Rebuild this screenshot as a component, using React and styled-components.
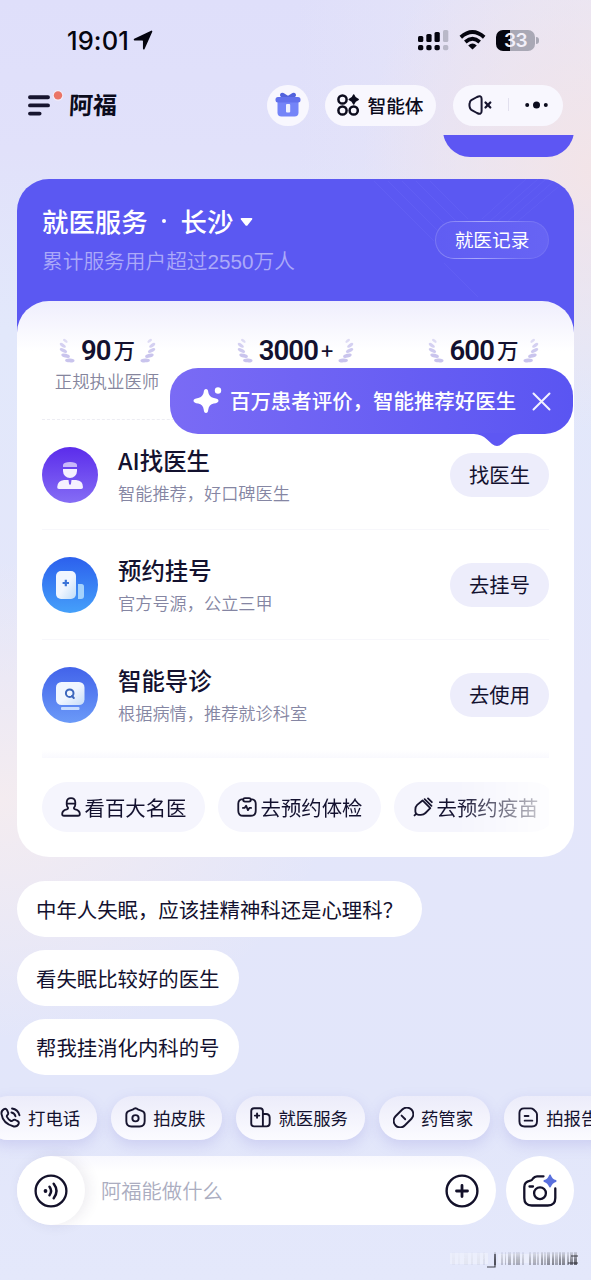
import React from 'react';
import styled, { createGlobalStyle, css } from 'styled-components';

const GlobalStyle = createGlobalStyle`
  * {
    box-sizing: border-box;
  }

  body {
    margin: 0;
    font-family: "Noto Sans CJK SC", sans-serif;
    color: #13112f;
  }

  button {
    border: 0;
    padding: 0;
    margin: 0;
    background: none;
    color: inherit;
    font: inherit;
    white-space: nowrap;
  }

  svg {
    display: block;
    flex: none;
  }
`;

const Screen = styled.div`
  width: 591px;
  height: 1280px;
  overflow: hidden;
  display: flex;
  flex-direction: column;
  background:
    radial-gradient(ellipse 230px 260px at 100% 170px, rgba(243, 228, 231, .95), rgba(243, 228, 231, 0)),
    radial-gradient(ellipse 330px 240px at 0 800px, rgba(244, 236, 240, 1), rgba(244, 236, 240, 0)),
    linear-gradient(90deg, rgba(224, 223, 250, 0) 50%, rgba(233, 231, 246, .9) 100%) 0 0 / 100% 200px no-repeat,
    linear-gradient(180deg, #dfdffa 0, #e1e1fa 150px, #e2e8fb 330px, #e4e6fa 700px, #e2e6fa 1100px, #e4e8fb 1280px);
`;

const StatusBar = styled.div`
  height: 80px;
  flex: none;
  display: flex;
  align-items: center;
  padding: 0 52px 0 67px;
`;

const Time = styled.span`
  font-family: Inter, sans-serif;
  font-size: 25.5px;
  font-weight: 500;
  line-height: 30px;
  letter-spacing: .1px;
  color: #05050f;
  padding-top: 1px;
  margin-right: 4px;
`;

const StatusIcons = styled.div`
  margin-left: auto;
  display: flex;
  align-items: center;
  gap: 10px;
`;

const Battery = styled.div`
  display: flex;
  align-items: center;
  gap: 1px;

  &::after {
    content: '';
    width: 3px;
    height: 7px;
    border-radius: 0 3px 3px 0;
    background: #a9a8b5;
  }
`;

const BatteryBody = styled.div`
  width: 39px;
  height: 21px;
  border-radius: 7px;
  background: linear-gradient(90deg, #06060f 35%, #a9a8b5 35%);
  color: #f2f0fa;
  font: 600 19px/21px Inter, sans-serif;
  letter-spacing: -.5px;
  text-align: center;
`;

const NavBar = styled.header`
  height: 55px;
  flex: none;
  display: flex;
  align-items: center;
  padding: 0 28px 5px 27px;
`;

const Brand = styled.h1`
  margin: 0 auto 0 5px;
  padding-bottom: 2px;
  font-size: 24px;
  line-height: 30px;
  font-weight: 700;
  color: #0b0b1c;
  transform: skewX(-3deg);
`;

const NavPill = styled.div`
  height: 41px;
  width: ${({ width }) => width}px;
  margin-left: ${({ gap }) => gap || 0}px;
  padding-bottom: 1px;
  border-radius: 21px;
  background: #f8f7fe;
  display: flex;
  align-items: center;
  justify-content: center;
  gap: 8px;
  font-size: 18.7px;
  font-weight: 500;
  white-space: nowrap;
  color: #0b0b1c;
`;

const PillText = styled.span`
  padding-bottom: 1px;
`;

const NavSeparator = styled.span`
  width: 1px;
  height: 13px;
  margin: 0 8px;
  background: #e2e0ee;
`;

const Content = styled.main`
  height: 961px;
  flex: none;
  padding: 0 17px;
`;

const SentBubble = styled.div`
  width: 131px;
  height: 22px;
  margin-left: auto;
  overflow: hidden;
  display: flex;
  align-items: flex-end;

  &::after {
    content: '';
    flex: none;
    width: 131px;
    height: 56px;
    border-radius: 27px;
    background: #5d56f3;
  }
`;

const ServiceCard = styled.section`
  margin-top: 22px;
  height: 678px;
  border-radius: 32px;
  background: linear-gradient(180deg, #5b58f2 0, #5b58f2 200px, transparent 200px);
`;

const CardHead = styled.div`
  height: 122px;
  padding: 0 25px;
  display: flex;
  justify-content: space-between;
  position: relative;
  overflow: hidden;
  border-radius: 32px 32px 0 0;
`;

const HeadPattern = styled.svg`
  position: absolute;
  right: 0;
  top: 0;
`;

const HeadTitle = styled.h2`
  margin: 24px 0 0;
  display: flex;
  align-items: center;
  font-size: 26.4px;
  line-height: 36px;
  font-weight: 500;
  color: #fff;
`;

const Dot = styled.span`
  width: 4px;
  height: 4px;
  border-radius: 2px;
  margin: 0 15px 0 14px;
  background: #fff;
`;

const Caret = styled.svg`
  margin: 2px 0 0 7px;
`;

const HeadNote = styled.p`
  margin: 8px 0 0;
  font-family: "Liberation Sans", "Noto Sans CJK SC", sans-serif;
  font-size: 20.7px;
  line-height: 30px;
  font-weight: 350;
  color: #aba9f9;
`;

const RecordButton = styled.button`
  position: relative;
  width: 114px;
  height: 38px;
  margin-top: 42px;
  border-radius: 19px;
  border: 1px solid transparent;
  background:
    linear-gradient(90deg, #605df3, #6764f4) padding-box,
    linear-gradient(100deg, #7573f3 0, #aba9fb 40%, #7a78f5 75%, #716ef5 100%) border-box;
  color: #fff;
  font-size: 18.7px;
  line-height: 32px;
  padding-bottom: 2px;
`;

const Panel = styled.div`
  height: 556px;
  padding: 0 25px;
  border-radius: 32px;
  background: linear-gradient(180deg, #efeefd 0, #fff 50px);
`;

const Stats = styled.div`
  height: 119px;
  padding: 33px 13px 0;
  display: flex;
  justify-content: space-between;
  align-items: flex-start;
  border-bottom: 1px dashed #ededf3;
`;

const Stat = styled.div`
  width: 105px;
  display: flex;
  flex-direction: column;
  align-items: center;
  white-space: nowrap;
`;

const StatValue = styled.div`
  display: flex;
  align-items: center;
  height: 32px;
`;

const StatNumber = styled.b`
  margin-left: 6px;
  padding-top: 2px;
  font-family: Roboto, sans-serif;
  font-size: 27.5px;
  line-height: 32px;
  font-weight: 600;
  letter-spacing: -.9px;
`;

const StatUnit = styled.span`
  margin: 0 5px 0 3px;
  font-size: 21.5px;
  line-height: 30px;
  font-weight: 500;
  padding-bottom: 1px;
`;

const StatLabel = styled.div`
  margin: 2px 0 0 -1px;
  font-size: 17.4px;
  line-height: 26px;
  font-weight: 350;
  color: #85859d;
`;

const ServiceRow = styled.div`
  position: relative;
  height: 110px;
  display: flex;
  align-items: center;
  ${({ $last }) => !$last && css`
    border-bottom: 1px solid #f7f7fb;
  `}
`;

const ServiceText = styled.div`
  margin: 0 auto 0 20px;
  padding-top: 1px;
`;

const ServiceName = styled.h3`
  margin: 0;
  font-size: 23.4px;
  line-height: 32px;
  font-weight: 500;
`;

const ServiceNote = styled.p`
  margin: 3px 0 0;
  font-size: 17.2px;
  line-height: 28px;
  font-weight: 350;
  color: #8586a3;
`;

const ActionButton = styled.button`
  width: 99px;
  height: 44px;
  border-radius: 22px;
  background: #ededfb;
  font-size: 20.3px;
  line-height: 42px;
  padding-bottom: 2px;
`;

const Tooltip = styled.div`
  position: absolute;
  z-index: 2;
  left: 128px;
  top: -52px;
  width: 403px;
  height: 66px;
  padding: 0 22px 0 23px;
  border-radius: 28px;
  background: linear-gradient(90deg, #7a6bf5, #5a55f2);
  display: flex;
  align-items: center;
  font-size: 20.45px;
  line-height: 30px;
  font-weight: 500;
  white-space: nowrap;
  color: #fff;
`;

const TooltipText = styled.span`
  margin: 0 auto 2px 8px;
`;

const TooltipTail = styled.svg`
  position: absolute;
  left: 304px;
  top: 65px;
`;

const PanelFade = styled.div`
  height: 8px;
  background: linear-gradient(180deg, #fff, #f9f9fe);
`;

const LinkRow = styled.div`
  margin-top: 24px;
  display: flex;
  gap: 13px;
  overflow: hidden;
  mask-image: linear-gradient(90deg, #000 415px, transparent 525px);
`;

const LinkChip = styled.button`
  flex: none;
  width: 163px;
  height: 50px;
  border-radius: 25px;
  background: #f5f5fd;
  display: flex;
  align-items: center;
  justify-content: center;
  gap: 4px;
  font-size: 20.4px;
  line-height: 46px;
  padding-bottom: 1px;
`;

const Suggestions = styled.div`
  margin-top: 24px;
  display: flex;
  flex-direction: column;
  align-items: flex-start;
  gap: 13px;
`;

const Suggestion = styled.button`
  height: 56px;
  padding: 0 19px 1px 19px;
  border-radius: 28px;
  background: #fff;
  font-size: 20.4px;
`;

const QuickBar = styled.nav`
  height: 44px;
  flex: none;
  display: flex;
  gap: 14px;
  margin-left: -14px;
`;

const QuickChip = styled.button`
  flex: none;
  height: 44px;
  padding: 0 17px 1px 14px;
  border-radius: 22px;
  background: linear-gradient(180deg, #ececfa, #fbfbff);
  box-shadow: 0 5px 14px rgba(125, 120, 215, .22);
  display: flex;
  align-items: center;
  gap: 7px;
  font-size: 17.4px;
  line-height: 42px;
`;

const Composer = styled.div`
  margin-top: 16px;
  padding: 0 17px;
  flex: none;
  display: flex;
  gap: 10px;
`;

const InputBox = styled.div`
  width: 479px;
  height: 69px;
  padding-right: 17px;
  border-radius: 35px;
  background: linear-gradient(180deg, #f8f8fe, #fff 16px);
  display: flex;
  align-items: center;
`;

const RoundButton = styled.button`
  width: 68px;
  height: 69px;
  flex: none;
  border-radius: 50%;
  background: #fff;
  display: flex;
  align-items: center;
  justify-content: center;
  ${({ $raised }) => $raised && css`
    box-shadow: 4px 0 14px rgba(50, 45, 90, .09);
  `}
`;

const Placeholder = styled.span`
  margin: 0 auto 1px 16px;
  font-size: 20.3px;
  line-height: 30px;
  font-weight: 350;
  color: #abadc0;
`;

const Smudge = styled.svg`
  margin: 25px 12px 0 auto;
`;

const Line = ({ size = 21, width = 2, children }) => (
  <svg width={size} height={size} viewBox="0 0 22 22" fill="none" stroke="#17152f"
    strokeWidth={width} strokeLinecap="round" strokeLinejoin="round">
    {children}
  </svg>
);

const ArrowIcon = () => (
  <svg width="20" height="20" viewBox="0 0 20 20">
    <path d="M18.500 1.500 10.800 18.600V10.900q0-1.300-1.300-1.300H1.600Z" fill="#05050f" stroke="#05050f" strokeWidth="1.700" strokeLinejoin="round" />
  </svg>
);

const SignalIcon = () => (
  <svg width="31" height="21" viewBox="0 0 31 21" fill="#05050f">
    <rect x="0" y="6" width="5.3" height="6" rx="1.5" />
    <rect x="8.3" y="4" width="5.3" height="8" rx="1.5" />
    <rect x="16.5" y="2" width="5.3" height="10" rx="1.5" />
    <rect x="25" y="0" width="5.3" height="12" rx="1.5" fill="#b9b8c8" />
    <rect x="0" y="15" width="5.3" height="5.3" rx="1.7" />
    <rect x="8.3" y="15" width="5.3" height="5.3" rx="1.7" />
    <rect x="16.5" y="15" width="5.3" height="5.3" rx="1.7" />
    <rect x="25" y="15" width="5.3" height="5.3" rx="1.7" fill="#b9b8c8" />
  </svg>
);

const WifiIcon = () => (
  <svg width="27" height="20" viewBox="0 0 27 20" fill="none" stroke="#05050f" strokeWidth="3.800">
    <path d="M1.800 7.200Q13.500-3 25.200 7.200" />
    <path d="M6.300 12q7.200-6.300 14.400 0" />
    <path d="M9.200 15.400q4.300-3.800 8.600 0L13.500 19.400Z" fill="#05050f" stroke="none" />
  </svg>
);

const MenuIcon = () => (
  <svg width="37" height="31" viewBox="0 0 37 31">
    <path d="M3 7.200h18M3 15.400h18M3 23.600h9.600" stroke="#17152f" strokeWidth="3.900" strokeLinecap="round" />
    <circle cx="31" cy="5.400" r="5.300" fill="#f2ecf8" />
    <circle cx="31" cy="5.400" r="4.200" fill="#ea7567" />
  </svg>
);

const GiftIcon = () => (
  <svg width="26" height="26" viewBox="0 0 26 26">
    <path d="M5 3.500Q5 .2 8.500 1L13 3.800 17.500 1Q21 .2 21 3.500L19 7H7Z" fill="#5161dc" />
    <path d="M2.500 10h21v10.500a4 4 0 0 1-4 4h-13a4 4 0 0 1-4-4Z" fill="#7484f8" />
    <rect x=".5" y="5" width="25" height="5.500" rx="2.500" fill="#6270ec" />
    <rect x="11" y="12" width="4.200" height="8.500" rx="1" fill="#eef0ff" />
  </svg>
);

const AgentsIcon = () => (
  <svg width="22" height="22" viewBox="0 0 22 22" fill="none" stroke="#0b0b1c" strokeWidth="2.500">
    <circle cx="5.500" cy="5.500" r="4.100" />
    <circle cx="5.500" cy="16.500" r="4.100" />
    <circle cx="16.700" cy="16.500" r="4.100" />
    <path d="M16.700 1q1 3.500 4.500 4.500-3.500 1-4.500 4.500-1-3.500-4.500-4.500 3.500-1 4.500-4.500Z" fill="#0b0b1c" strokeWidth="1.400" strokeLinejoin="round" />
  </svg>
);

const MuteIcon = () => (
  <svg width="24" height="20" viewBox="0 0 24 20" fill="none" stroke="#17152f" strokeWidth="2" strokeLinecap="round" strokeLinejoin="round">
    <path d="M3.300 5.200 9 2q4.600-2.200 4.600 2v12q0 4.200-4.600 2L3.300 14.800Q2 14 1.700 12q-.5-2 0-4 .3-2 1.600-2.800Z" />
    <path d="m17.500 7.500 4.800 5m0-5-4.800 5" strokeWidth="2.300" />
  </svg>
);

const MoreIcon = () => (
  <svg width="23" height="8" viewBox="0 0 23 8" fill="#0b0b1c">
    <circle cx="2.200" cy="4" r="2" />
    <circle cx="11.500" cy="4" r="3.500" />
    <circle cx="20.800" cy="4" r="2" />
  </svg>
);

const Laurel = ({ flip }) => (
  <svg width="16" height="27" viewBox="0 0 17 27" fill="#c9c4ed">
    <g transform={flip ? 'translate(17 0) scale(-1 1)' : undefined}>
      <ellipse cx="6.700" cy="3.200" rx="2.900" ry="1.400" transform="rotate(38 6.700 3.200)" opacity=".6" />
      <ellipse cx="4" cy="8" rx="3.700" ry="1.700" transform="rotate(34 4 8)" opacity=".8" />
      <ellipse cx="4.700" cy="13.500" rx="4.200" ry="1.800" transform="rotate(25 4.700 13.500)" opacity=".9" />
      <ellipse cx="7" cy="19" rx="4.700" ry="2" transform="rotate(16 7 19)" />
      <ellipse cx="11.500" cy="24" rx="5" ry="2.100" transform="rotate(3 11.500 24)" />
    </g>
  </svg>
);

const DoctorIcon = () => (
  <svg width="56" height="56" viewBox="0 0 56 56">
    <linearGradient id="doctor" x2="0" y2="1">
      <stop stopColor="#5b2ceb" />
      <stop offset="1" stopColor="#856df5" />
    </linearGradient>
    <circle cx="28" cy="28" r="28" fill="url(#doctor)" />
    <path d="M21 20v-2.500q1-2.500 7-2.500t7 2.500V20Z" fill="#c9b8fa" />
    <path d="M21 22h14v2a7 7 0 0 1-14 0Z" fill="#f5f1ff" />
    <path d="M22 33h4.500l.6 4.500h1.800l.6-4.500H34q7 .6 7 7.200 0 1.800-1.800 1.800H17q-2 0-1.800-2 .4-6.400 6.800-7Z" fill="#f5f1ff" />
  </svg>
);

const HospitalIcon = () => (
  <svg width="56" height="56" viewBox="0 0 56 56">
    <linearGradient id="hospital" x2="0" y2="1">
      <stop stopColor="#2c60ed" />
      <stop offset="1" stopColor="#45a0fa" />
    </linearGradient>
    <linearGradient id="wall" x2="1" y2="1">
      <stop offset=".5" stopColor="#f0f6ff" />
      <stop offset="1" stopColor="#bfdcf8" />
    </linearGradient>
    <circle cx="28" cy="28" r="28" fill="url(#hospital)" />
    <rect x="14" y="14" width="20" height="28" rx="5" fill="url(#wall)" />
    <path d="M36 27h3.500q2.500 0 2.500 2.500V39q0 3-3 3h-3Z" fill="#a4d2fc" />
    <path d="M23.800 22.800v6.400M20.600 26H27" stroke="#3b74d8" strokeWidth="2.200" />
  </svg>
);

const TriageIcon = () => (
  <svg width="56" height="56" viewBox="0 0 56 56">
    <linearGradient id="triage" x2="0" y2="1">
      <stop stopColor="#4263ea" />
      <stop offset="1" stopColor="#6b9af8" />
    </linearGradient>
    <linearGradient id="monitor" x2="1" y2="1">
      <stop offset=".5" stopColor="#f0f6ff" />
      <stop offset="1" stopColor="#c6dcf8" />
    </linearGradient>
    <circle cx="28" cy="28" r="28" fill="url(#triage)" />
    <rect x="14" y="15" width="28.500" height="23" rx="5.500" fill="url(#monitor)" />
    <rect x="19" y="40" width="18.500" height="3" rx="1" fill="#c7dcff" />
    <circle cx="27.700" cy="26.200" r="3.800" fill="none" stroke="#3c67bd" strokeWidth="2" />
    <path d="m30 29 1.800 2" stroke="#3c67bd" strokeWidth="2" strokeLinecap="round" />
  </svg>
);

const SparkIcon = () => (
  <svg width="29" height="30" viewBox="0 0 29 30" fill="#fff">
    <path d="M13 3q2 0 2.300 3.200.7 4.900 5.500 5.700 4.700.6 4.700 2.800t-4.700 2.800q-4.900.8-5.500 6Q15 27 13 27t-2.300-3.500q-.6-5.200-5.500-6Q.5 16.900.5 14.700t4.700-2.800q4.800-.8 5.500-5.700Q11 3 13 3Z" />
    <circle cx="25" cy="4.500" r="3.200" />
  </svg>
);

const CloseIcon = () => (
  <svg width="19" height="19" viewBox="0 0 19 19" stroke="#f2f1ff" strokeWidth="2" strokeLinecap="round">
    <path d="m1.500 1.500 16 16m0-16-16 16" />
  </svg>
);

const PhoneIcon = () => (
  <Line>
    <path d="M4.200 2.200Q1 4 1.600 7.500 3 17.500 14.500 20.400q3.500.5 5-2.700.7-1.900-1-2.900l-2.300-1.200q-1.500-.7-2.700.4-1.200 1.300-2.600.3-2.300-1.400-3.600-3.900-.6-1.200.7-2.300 1-1 .4-2.500L7.300 3.100Q6.200 1.200 4.200 2.200Z" />
    <path d="M12 5.800q3.300.7 4.200 4M12.600 1.600q6.200 1 7.800 7" />
  </Line>
);

const SkinCameraIcon = () => (
  <Line>
    <path d="M8 2.800 9.800 1.600q1.200-.6 2.400 0L14 2.800l3.600 1.300q3 1 3 4V15q0 5.400-5.400 5.400H6.800Q1.400 20.400 1.400 15V8.100q0-3 3-4Z" />
    <circle cx="11" cy="11.800" r="3.300" />
  </Line>
);

const BuildingIcon = () => (
  <Line>
    <path d="M13.500 20.300H4.300q-3 0-3-3V4.300q0-3 3-3h6.200q3 0 3 3v16Zm0-13h3.300q3.800 0 3.800 3.800v6q0 3.200-3.200 3.200h-3.900M7.400 6.700v4.600M5.100 9h4.600" />
  </Line>
);

const PillIcon = () => (
  <Line>
    <rect x="-.8" y="4.200" width="23.600" height="13.600" rx="6.800" transform="rotate(-45 11 11)" />
    <path d="m9 9 3.800 3.800" />
  </Line>
);

const ReportIcon = () => (
  <Line>
    <path d="M6.500 1.400h6.800q1.700 0 3 1.200l2.300 2.300q1.300 1.300 1.300 3V15q0 5.500-5.400 5.500H7Q1.500 20.500 1.500 15V6.400q0-5 5-5ZM7 9.500h4M7 14.300h8" />
  </Line>
);

const PersonIcon = () => (
  <Line size={20}>
    <path d="M6.300 5.600q.2-4.300 4.700-4.300t4.700 4.300v2.900q-.2 2-1.400 3.200-.5 1.300 1.400 1.900 5 1.200 5 5 0 2-2 2H3.300q-2 0-2-2 0-3.800 5-5 1.900-.6 1.400-1.900-1.200-1.200-1.400-3.200ZM6.500 7.200h9" />
  </Line>
);

const CheckupIcon = () => (
  <Line size={20}>
    <path d="M6.500 2.400Q1.400 2.700 1.400 7.500V15q0 5.600 5.600 5.600h8q5.600 0 5.600-5.600V7.500q0-4.800-5.100-5.100M8.800 1.200h4.400q2 0 2 1.900T13.200 5H8.800q-2 0-2-1.900t2-1.900ZM6.500 12h1.800L10 9.500l2 5 1.600-2.500h1.900" />
  </Line>
);

const VaccineIcon = () => (
  <Line size={20}>
    <path d="m10.500 3.800 8.500 8.500-5.300 5.300q-2 2-5 2H6.200q-3.400-.2-3.600-3.600v-2.300q0-3 2-5ZM3.500 18.500l-1.800 1.800M12.800 2.300l7.500 7.500M16.500 1.500l4.200 4.200" />
  </Line>
);

const VoiceIcon = () => (
  <svg width="34" height="34" viewBox="0 0 34 34" fill="none" stroke="#13112a" strokeWidth="2.300" strokeLinecap="round">
    <circle cx="17" cy="17" r="15.400" />
    <circle cx="11.500" cy="17" r="1.900" fill="#13112a" stroke="none" />
    <path d="M15.500 12.800q3.200 4.200 0 8.400M19.700 9.800q5.600 7.200 0 14.400" strokeWidth="2.500" />
  </svg>
);

const PlusIcon = () => (
  <svg width="34" height="34" viewBox="0 0 34 34" fill="none" stroke="#13112a" strokeWidth="2.400" strokeLinecap="round">
    <circle cx="17" cy="17" r="15.400" />
    <path d="M17 11.500v11M11.500 17h11" strokeWidth="2.800" />
  </svg>
);

const CameraIcon = () => (
  <svg width="36" height="34" viewBox="0 0 36 34" fill="none" stroke="#13112a" strokeWidth="2.300" strokeLinecap="round">
    <path d="M21.500 2.300H15q-2.500 0-4 2.200Q9.800 6.500 8.300 6.700 2.300 7.800 2.300 13v11q0 7.500 7.500 7.500h16q7.500 0 7.500-7.500V14.500M7.500 12.500h3.500" />
    <circle cx="18" cy="19.200" r="5.900" />
    <path d="M28 1.500q1.600 4.300 5.600 5.500-4 1.200-5.600 5.500-1.600-4.300-5.600-5.500 4-1.200 5.600-5.500Z" fill="#5a70dd" stroke="#5a70dd" strokeWidth="1.900" strokeLinejoin="round" />
  </svg>
);

const smudgeBars = [
  [2, 3, .04], [8, 2, .03], [14, 4, .05], [21, 2, .06], [27, 3, .06], [33, 2, .1], [44, 2, .75],
  [51, 2, .3], [55, 1, .35], [58, 3, .45], [63, 2, .4], [66, 4, .45], [72, 2, .3], [79, 2, .45],
  [83, 3, .45], [87, 2, .35], [91, 2, .6], [94, 2, .45], [97, 3, .65], [102, 2, .7], [105, 3, .5],
  [109, 2, .75], [112, 3, .7], [117, 2, .55], [120, 3, .75], [124, 3, .9],
];

const SmudgeMark = () => (
  <Smudge width="129" height="18" viewBox="0 0 129 18">
    <defs>
      <linearGradient id="smudge" x2="0" y2="1">
        <stop stopColor="#2a2a33" stopOpacity=".15" />
        <stop offset=".6" stopColor="#2a2a33" stopOpacity=".65" />
        <stop offset="1" stopColor="#2a2a33" stopOpacity=".75" />
      </linearGradient>
      <filter id="smear">
        <feGaussianBlur stdDeviation=".6" />
      </filter>
    </defs>
    <path d="M0 3h38v11H0zM48 4h80v9H48z" fill="#fff" opacity=".3" filter="url(#smear)" />
    <g filter="url(#smear)">
      {smudgeBars.map(([x, width, opacity]) => (
        <rect key={x} x={x} y="2" width={width} height="13" fill="url(#smudge)" opacity={opacity} />
      ))}
    </g>
    <path d="M37 17h8V4M121 6h7M118 13h10" fill="none" stroke="#25252d" strokeWidth="1.200" opacity=".85" />
  </Smudge>
);

const stats = [
  { value: '90', unit: '万', label: '正规执业医师' },
  { value: '3000', unit: '+' },
  { value: '600', unit: '万' },
];

const services = [
  { icon: <DoctorIcon />, name: 'AI找医生', note: '智能推荐，好口碑医生', action: '找医生', tip: '百万患者评价，智能推荐好医生' },
  { icon: <HospitalIcon />, name: '预约挂号', note: '官方号源，公立三甲', action: '去挂号' },
  { icon: <TriageIcon />, name: '智能导诊', note: '根据病情，推荐就诊科室', action: '去使用' },
];

const links = [
  { icon: <PersonIcon />, text: '看百大名医' },
  { icon: <CheckupIcon />, text: '去预约体检' },
  { icon: <VaccineIcon />, text: '去预约疫苗' },
];

const suggestions = ['中年人失眠，应该挂精神科还是心理科？', '看失眠比较好的医生', '帮我挂消化内科的号'];

const quickActions = [
  { icon: <PhoneIcon />, text: '打电话' },
  { icon: <SkinCameraIcon />, text: '拍皮肤' },
  { icon: <BuildingIcon />, text: '就医服务' },
  { icon: <PillIcon />, text: '药管家' },
  { icon: <ReportIcon />, text: '拍报告' },
];

const ServiceTip = ({ text }) => (
  <Tooltip>
    <SparkIcon />
    <TooltipText>{text}</TooltipText>
    <CloseIcon />
    <TooltipTail width="46" height="14" viewBox="0 0 46 14">
      <path d="M0 0h46v1q-8 .3-12.500 5L28 11q-5 4-10 0l-5.500-5Q8 1.300 0 1Z" fill="#5e57f3" />
    </TooltipTail>
  </Tooltip>
);

const App = () => (
  <>
    <GlobalStyle />
    <Screen>
      <StatusBar>
        <Time>19:01</Time>
        <ArrowIcon />
        <StatusIcons>
          <SignalIcon />
          <WifiIcon />
          <Battery>
            <BatteryBody>33</BatteryBody>
          </Battery>
        </StatusIcons>
      </StatusBar>

      <NavBar>
        <MenuIcon />
        <Brand>阿福</Brand>
        <NavPill width={42}>
          <GiftIcon />
        </NavPill>
        <NavPill width={111} gap={16}>
          <AgentsIcon />
          <PillText>智能体</PillText>
        </NavPill>
        <NavPill width={110} gap={17}>
          <MuteIcon />
          <NavSeparator />
          <MoreIcon />
        </NavPill>
      </NavBar>

      <Content>
        <SentBubble />
        <ServiceCard>
          <CardHead>
            <HeadPattern width="200" height="122" viewBox="0 0 200 122" fill="none" stroke="#8280ff" strokeOpacity=".16">
              <path d="m0 2 60 60M14 2l64 64M28 2l50 50M42 2l44 44M56 2l38 38M108 40l44-40M116 42l48-42M124 42l48-42M134 42l46-40M144 42l40-34M70 84l34 34" />
            </HeadPattern>
            <div>
              <HeadTitle>
                就医服务
                <Dot />
                长沙
                <Caret width="13" height="10" viewBox="0 0 13 10">
                  <path d="M1.500 1h10q1.500.3.600 1.600L7.600 8.200q-1.100 1.300-2.200 0L.9 2.600Q0 1.300 1.500 1Z" fill="#fff" />
                </Caret>
              </HeadTitle>
              <HeadNote>累计服务用户超过2550万人</HeadNote>
            </div>
            <RecordButton>就医记录</RecordButton>
          </CardHead>

          <Panel>
            <Stats>
              {stats.map(({ value, unit, label }) => (
                <Stat key={value}>
                  <StatValue>
                    <Laurel />
                    <StatNumber>{value}</StatNumber>
                    <StatUnit>{unit}</StatUnit>
                    <Laurel flip />
                  </StatValue>
                  {label && <StatLabel>{label}</StatLabel>}
                </Stat>
              ))}
            </Stats>

            {services.map(({ icon, name, note, action, tip }, index) => (
              <ServiceRow key={name} $last={index === services.length - 1}>
                {icon}
                <ServiceText>
                  <ServiceName>{name}</ServiceName>
                  <ServiceNote>{note}</ServiceNote>
                </ServiceText>
                <ActionButton>{action}</ActionButton>
                {tip && <ServiceTip text={tip} />}
              </ServiceRow>
            ))}
            <PanelFade />

            <LinkRow>
              {links.map(({ icon, text }) => (
                <LinkChip key={text}>
                  {icon}
                  {text}
                </LinkChip>
              ))}
            </LinkRow>
          </Panel>
        </ServiceCard>

        <Suggestions>
          {suggestions.map((text) => (
            <Suggestion key={text}>{text}</Suggestion>
          ))}
        </Suggestions>
      </Content>

      <QuickBar>
        {quickActions.map(({ icon, text }) => (
          <QuickChip key={text}>
            {icon}
            {text}
          </QuickChip>
        ))}
      </QuickBar>

      <Composer>
        <InputBox>
          <RoundButton $raised>
            <VoiceIcon />
          </RoundButton>
          <Placeholder>阿福能做什么</Placeholder>
          <PlusIcon />
        </InputBox>
        <RoundButton>
          <CameraIcon />
        </RoundButton>
      </Composer>
      <SmudgeMark />
    </Screen>
  </>
);

export default App;
